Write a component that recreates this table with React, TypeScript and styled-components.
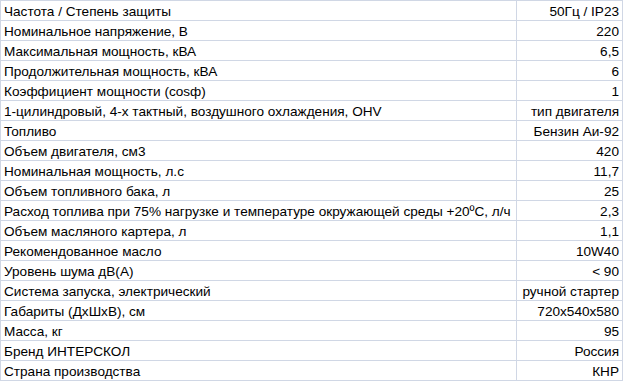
import React from 'react'
import styled, { createGlobalStyle } from 'styled-components'

const GlobalStyle = createGlobalStyle`
  html, body {
    margin: 0;
    padding: 0;
    background: #ffffff;
  }
`

const Sheet = styled.div`
  display: grid;
  grid-template-columns: 516px 106px;
  width: 623px;
  border-left: 1px solid #d0d7e5;
  border-top: 1px solid #d0d7e5;
  font-family: 'Liberation Sans', Arial, sans-serif;
  font-size: 13.6px;
  color: #000000;
`

const Cell = styled.div<{ $align?: 'left' | 'right' }>`
  box-sizing: border-box;
  height: 20px;
  padding: 1px 3px 0 3px;
  display: flex;
  align-items: center;
  justify-content: ${(p) => (p.$align === 'right' ? 'flex-end' : 'flex-start')};
  border-right: 1px solid #d0d7e5;
  border-bottom: 1px solid #d0d7e5;
  white-space: nowrap;
  overflow: hidden;
`

const rows: [string, string][] = [
  ['Частота / Степень защиты', '50Гц / IP23'],
  ['Номинальное напряжение, В', '220'],
  ['Максимальная мощность, кВА', '6,5'],
  ['Продолжительная мощность, кВА', '6'],
  ['Коэффициент мощности (cosф)', '1'],
  ['1-цилиндровый, 4-х тактный, воздушного охлаждения, OHV', 'тип двигателя'],
  ['Топливо', 'Бензин Аи-92'],
  ['Объем двигателя, см3', '420'],
  ['Номинальная мощность, л.с', '11,7'],
  ['Объем топливного бака, л', '25'],
  ['Расход топлива при 75% нагрузке и температуре окружающей среды +20ºС, л/ч', '2,3'],
  ['Объем масляного картера, л', '1,1'],
  ['Рекомендованное масло', '10W40'],
  ['Уровень шума дВ(А)', '< 90'],
  ['Система запуска, электрический', 'ручной стартер'],
  ['Габариты (ДхШхВ), см', '720x540x580'],
  ['Масса, кг', '95'],
  ['Бренд ИНТЕРСКОЛ', 'Россия'],
  ['Страна производства', 'КНР'],
]

export default function App() {
  return (
    <>
      <GlobalStyle />
      <Sheet>
        {rows.map(([name, value], i) => (
          <React.Fragment key={i}>
            <Cell>{name}</Cell>
            <Cell $align="right">{value}</Cell>
          </React.Fragment>
        ))}
      </Sheet>
    </>
  )
}
